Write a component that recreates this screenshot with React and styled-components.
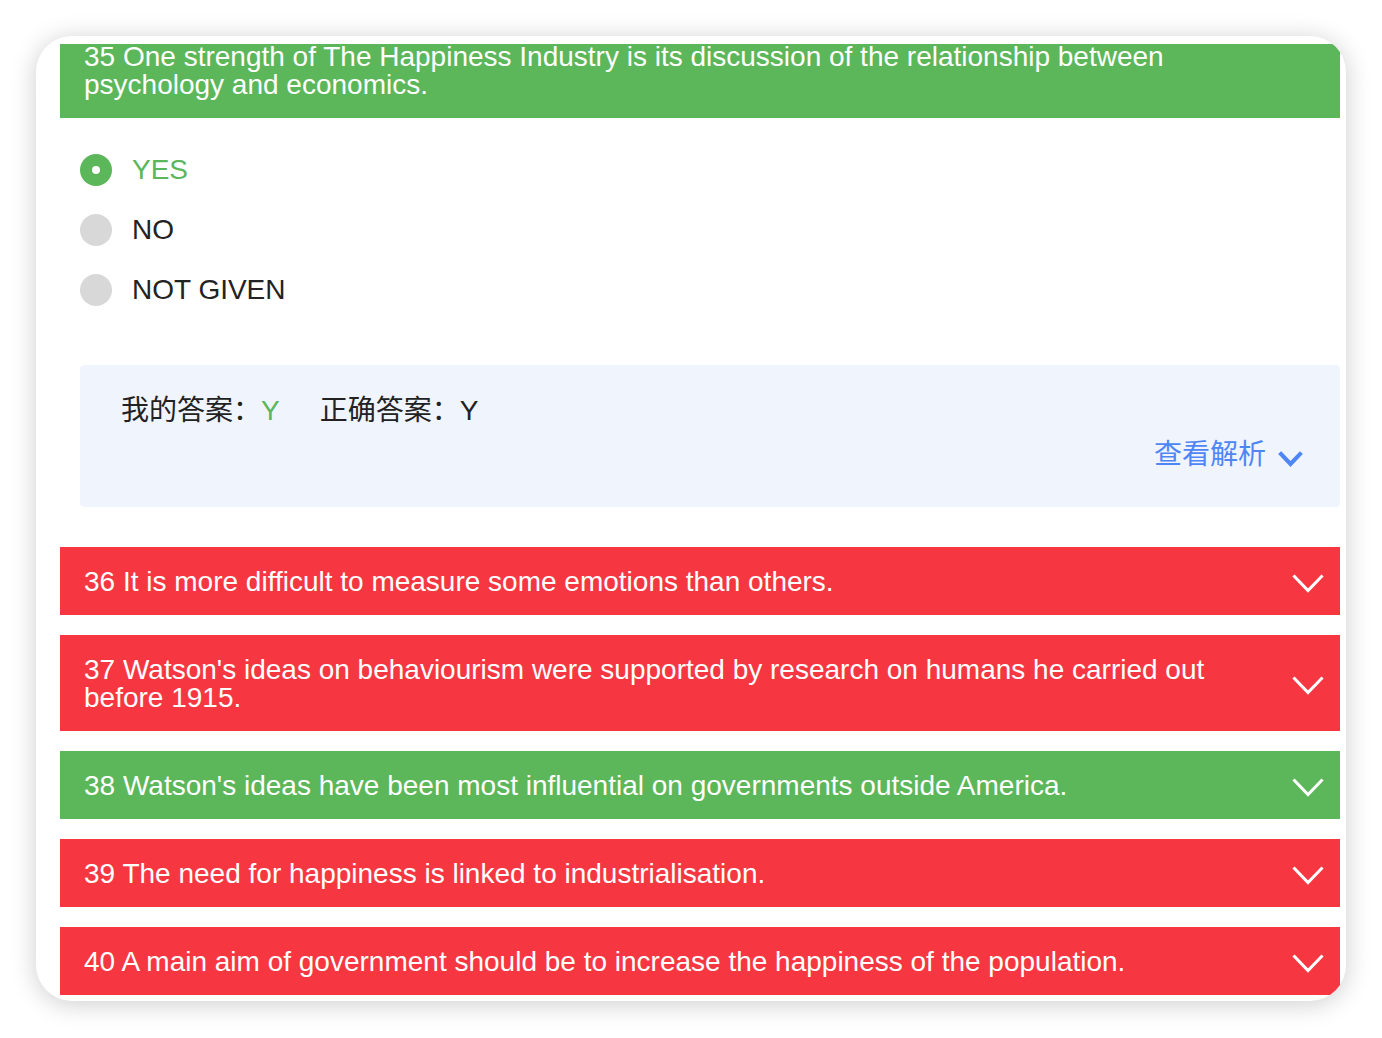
import React from "react";
import styled, { createGlobalStyle } from "styled-components";

const GREEN = "#5cb65a";
const RED = "#f63741";
const BLUE = "#4f86f6";

const questions = [
  { num: 36, text: "It is more difficult to measure some emotions than others.", correct: false },
  {
    num: 37,
    text: "Watson's ideas on behaviourism were supported by research on humans he carried out before 1915.",
    correct: false,
  },
  { num: 38, text: "Watson's ideas have been most influential on governments outside America.", correct: true },
  { num: 39, text: "The need for happiness is linked to industrialisation.", correct: false },
  {
    num: 40,
    text: "A main aim of government should be to increase the happiness of the population.",
    correct: false,
  },
];

const options = [
  { label: "YES", checked: true },
  { label: "NO", checked: false },
  { label: "NOT GIVEN", checked: false },
];

const Chevron = ({ color = "#fff", width = 32, height = 19, stroke = 3 }) => (
  <svg width={width} height={height} viewBox={`0 0 ${width} ${height}`} fill="none">
    <polyline
      points={`${stroke / 2 + 1},${stroke / 2 + 1} ${width / 2},${height - stroke / 2 - 1} ${width - stroke / 2 - 1},${stroke / 2 + 1}`}
      stroke={color}
      strokeWidth={stroke}
      strokeLinecap="square"
      strokeLinejoin="miter"
    />
  </svg>
);

const App = () => {
  return (
    <>
      <GlobalStyle />
      <Card>
        <Viewport>
          <Content>
            <QuestionBar $correct>
              <BarText>
                35 One strength of The Happiness Industry is its discussion of the relationship between
                psychology and economics.
              </BarText>
            </QuestionBar>

            <OptionList>
              {options.map(({ label, checked }) => (
                <Option key={label} $checked={checked}>
                  <Radio $checked={checked} />
                  {label}
                </Option>
              ))}
            </OptionList>

            <AnswerBox>
              <AnswerRow>
                <AnswerItem>
                  我的答案：<Mine>Y</Mine>
                </AnswerItem>
                <AnswerItem>正确答案：Y</AnswerItem>
              </AnswerRow>
              <ExplainLink>
                查看解析
                <Chevron color={BLUE} width={25} height={16} stroke={4} />
              </ExplainLink>
            </AnswerBox>

            {questions.map(({ num, text, correct }) => (
              <QuestionBar key={num} $correct={correct}>
                <BarText>
                  {num} {text}
                </BarText>
                <BarIcon>
                  <Chevron />
                </BarIcon>
              </QuestionBar>
            ))}
          </Content>
        </Viewport>
      </Card>
    </>
  );
};

const GlobalStyle = createGlobalStyle`
  * {
    box-sizing: border-box;
  }

  body {
    margin: 0;
    background: #fff;
    font-family: "Liberation Sans", "Noto Sans CJK SC", Arial, sans-serif;
  }
`;

const Card = styled.div`
  margin: 36px;
  height: 965px;
  padding: 8px 0 6px;
  background: #fff;
  border-radius: 36px;
  overflow: hidden;
  box-shadow: 0 3px 26px rgba(0, 0, 0, 0.2);
`;

const Viewport = styled.div`
  height: 100%;
  overflow: hidden;
  padding: 0 6px 0 24px;
`;

const Content = styled.div`
  margin-top: -22px;
`;

const QuestionBar = styled.div`
  display: flex;
  align-items: center;
  justify-content: space-between;
  padding: 21px 16px 19px 24px;
  margin-bottom: 20px;
  background: ${({ $correct }) => ($correct ? GREEN : RED)};
  color: #fff;
`;

const BarText = styled.div`
  width: 1176px;
  font-size: 28px;
  line-height: 28px;
`;

const BarIcon = styled.span`
  display: flex;
  align-items: center;
  padding-top: 2px;
`;

const OptionList = styled.div`
  display: flex;
  flex-direction: column;
  padding: 2px 20px 45px;
`;

const Option = styled.label`
  display: flex;
  align-items: center;
  gap: 20px;
  height: 60px;
  font-size: 28px;
  color: ${({ $checked }) => ($checked ? GREEN : "#222")};
`;

const Radio = styled.span`
  width: 32px;
  height: 32px;
  border-radius: 50%;
  background: ${({ $checked }) => ($checked ? GREEN : "#d8d8d8")};
  display: flex;
  align-items: center;
  justify-content: center;

  &::after {
    content: "";
    display: ${({ $checked }) => ($checked ? "block" : "none")};
    width: 8px;
    height: 8px;
    border-radius: 50%;
    background: #fff;
  }
`;

const AnswerBox = styled.div`
  margin: 0 0 40px 20px;
  padding: 32px 37px 38px 41px;
  background: #f0f4fd;
  border-radius: 4px;
  font-size: 28px;
  line-height: 28px;
  color: #222;
`;

const AnswerRow = styled.div`
  display: flex;
  gap: 40px;
`;

const AnswerItem = styled.span``;

const Mine = styled.span`
  color: ${GREEN};
`;

const ExplainLink = styled.div`
  display: flex;
  align-items: center;
  justify-content: flex-end;
  gap: 12px;
  margin-top: 16px;
  color: ${BLUE};

  svg {
    margin-top: 8px;
  }
`;

export default App;
